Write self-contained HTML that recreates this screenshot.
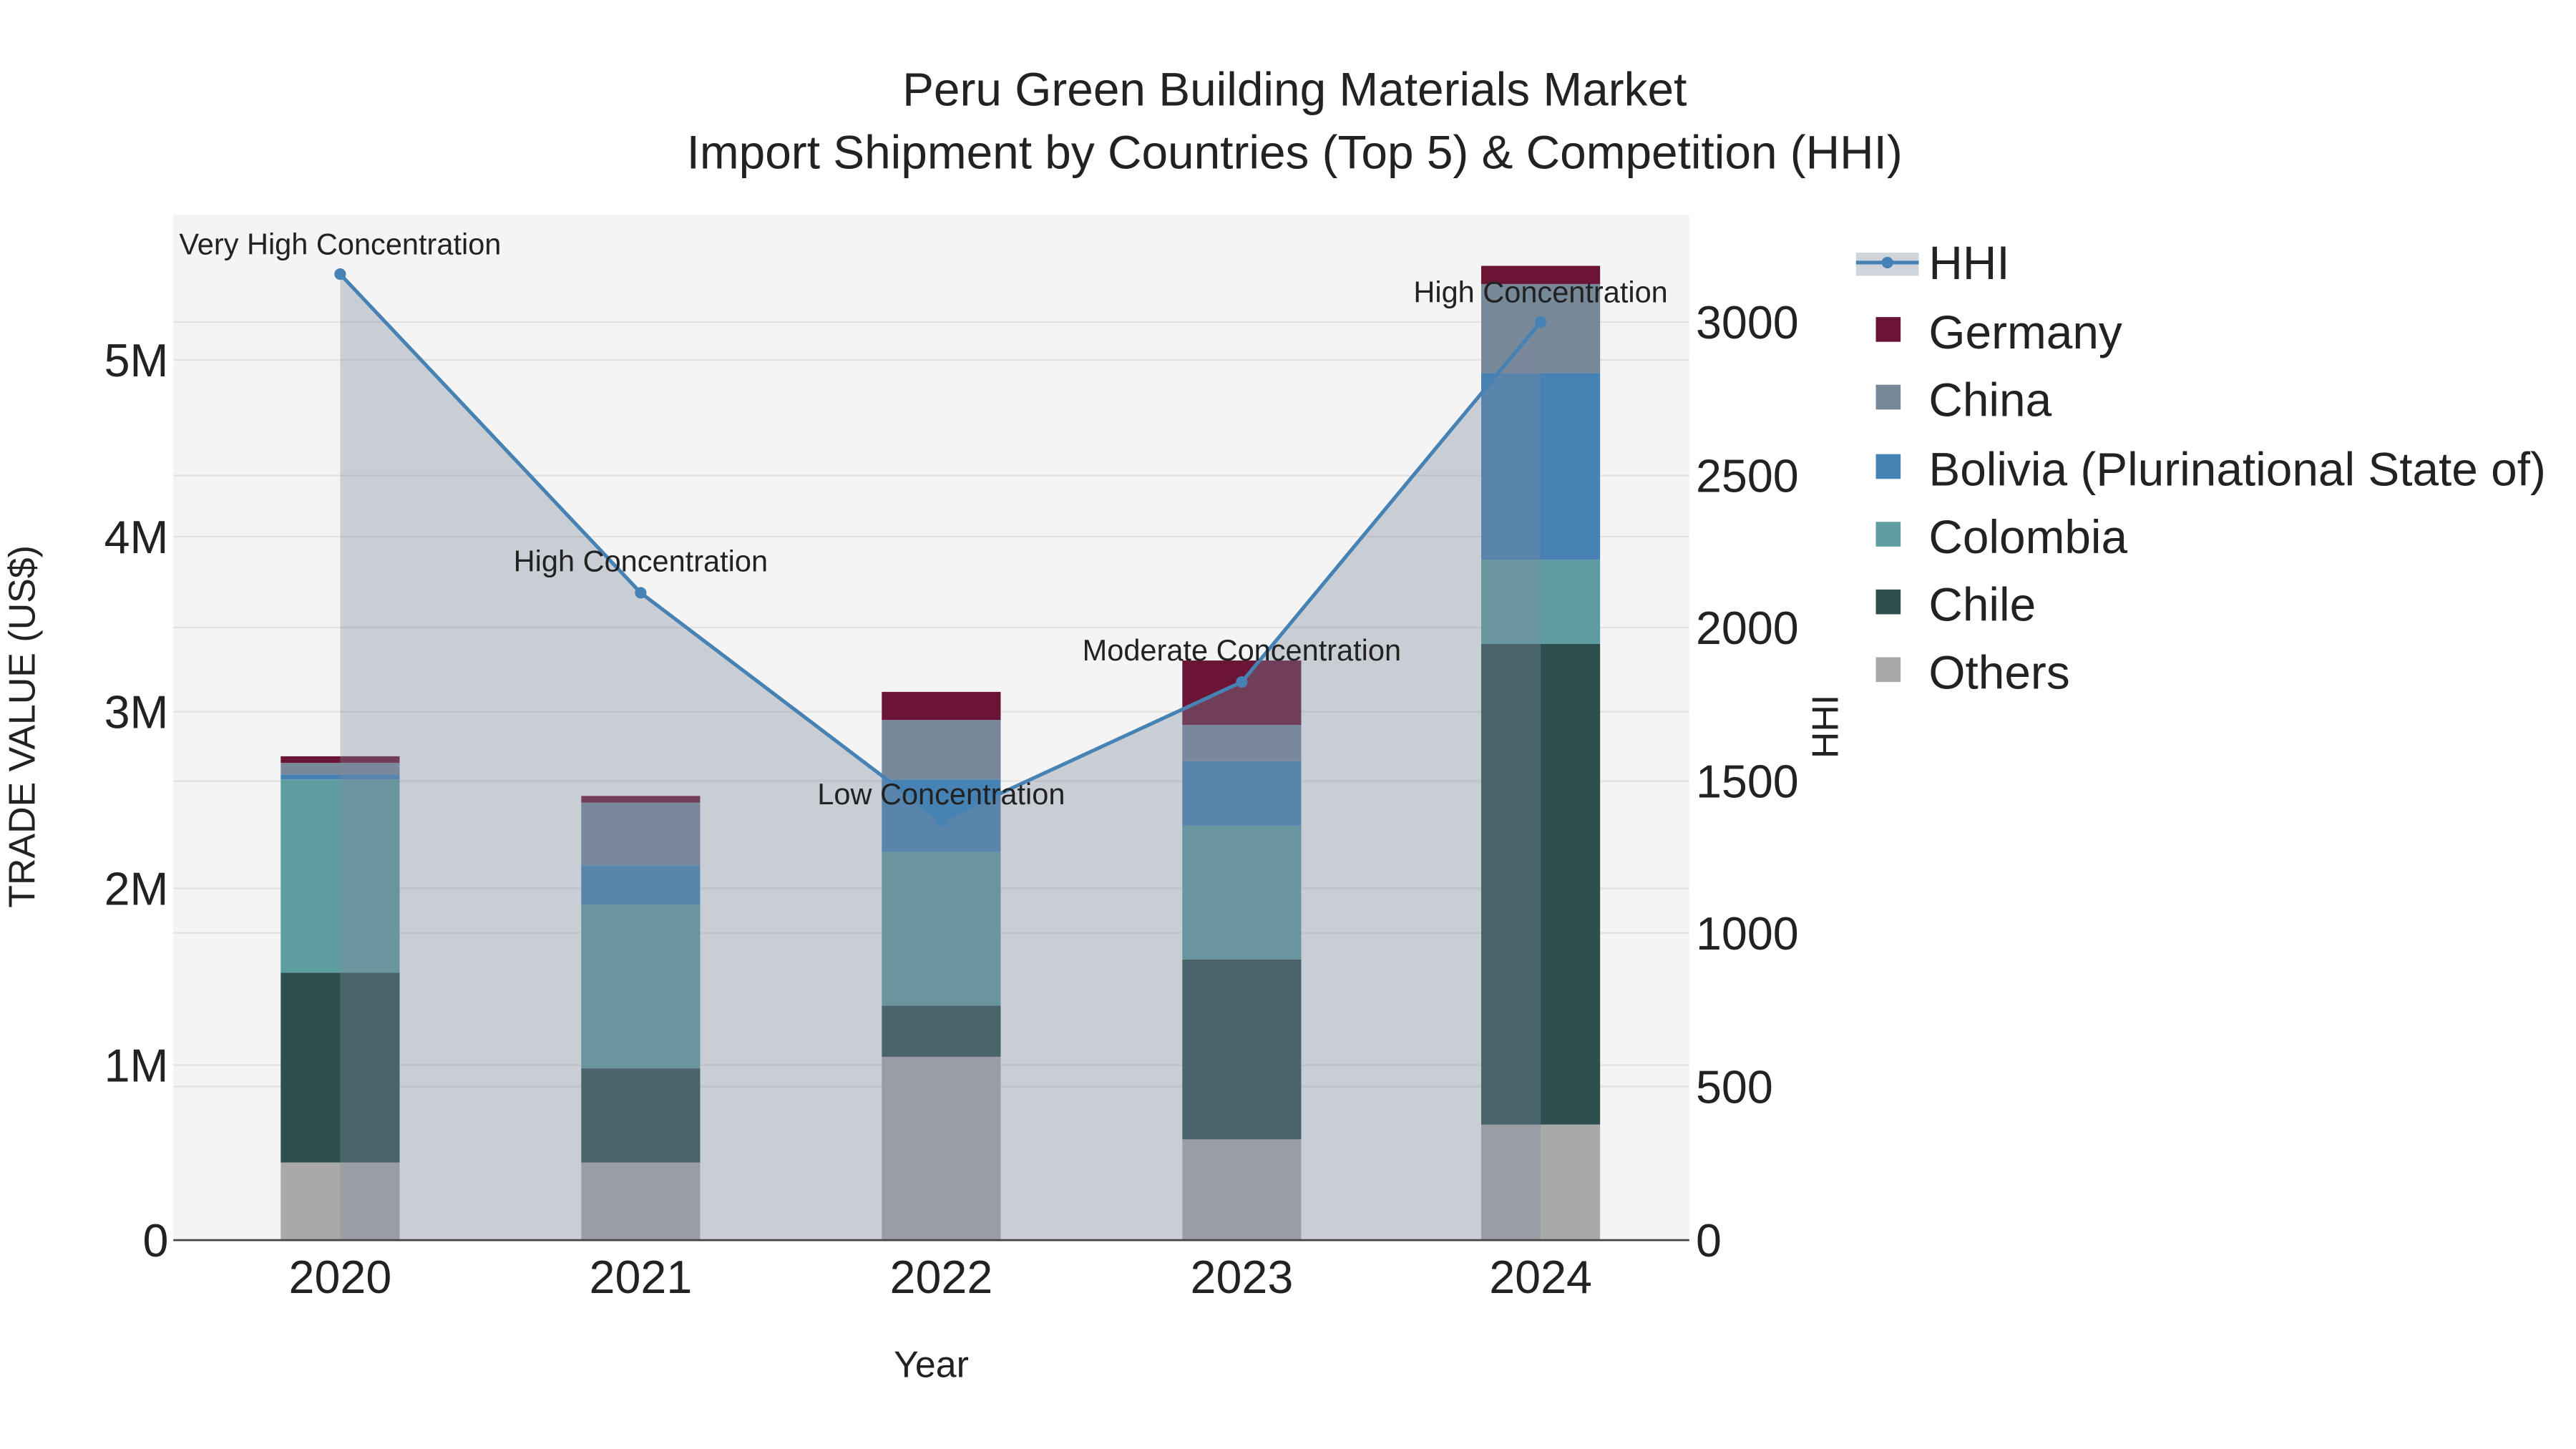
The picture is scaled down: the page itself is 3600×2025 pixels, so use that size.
<!DOCTYPE html>
<html><head><meta charset="utf-8"><style>
html,body{margin:0;padding:0;background:#fff;}
svg{display:block;}
text{font-family:"Liberation Sans",sans-serif;fill:#222;}
</style></head><body>
<svg width="3600" height="2025" viewBox="0 0 1560 877.5" xmlns="http://www.w3.org/2000/svg">
<rect width="1560" height="877.5" fill="#fff"/>
<rect x="105" y="130" width="918" height="621" fill="#f4f4f4"/>
<g stroke="#e2e2e2" stroke-width="1">
<line x1="105" x2="1023" y1="645" y2="645"/><line x1="105" x2="1023" y1="538" y2="538"/><line x1="105" x2="1023" y1="431" y2="431"/><line x1="105" x2="1023" y1="325" y2="325"/><line x1="105" x2="1023" y1="218" y2="218"/>
<line x1="105" x2="1023" y1="658" y2="658"/><line x1="105" x2="1023" y1="565" y2="565"/><line x1="105" x2="1023" y1="473" y2="473"/><line x1="105" x2="1023" y1="380" y2="380"/><line x1="105" x2="1023" y1="288" y2="288"/><line x1="105" x2="1023" y1="195" y2="195"/>
</g>
<g>
<rect x="170" y="704" width="72" height="47" fill="#a9a9a9"/><rect x="170" y="589" width="72" height="115" fill="#2f4f4f"/><rect x="170" y="472" width="72" height="117" fill="#5f9ea0"/><rect x="170" y="469" width="72" height="3" fill="#4682b4"/><rect x="170" y="462" width="72" height="7" fill="#778899"/><rect x="170" y="458" width="72" height="4" fill="#6b1536"/>
<rect x="352" y="704" width="72" height="47" fill="#a9a9a9"/><rect x="352" y="647" width="72" height="57" fill="#2f4f4f"/><rect x="352" y="548" width="72" height="99" fill="#5f9ea0"/><rect x="352" y="524" width="72" height="24" fill="#4682b4"/><rect x="352" y="486" width="72" height="38" fill="#778899"/><rect x="352" y="482" width="72" height="4" fill="#6b1536"/>
<rect x="534" y="640" width="72" height="111" fill="#a9a9a9"/><rect x="534" y="609" width="72" height="31" fill="#2f4f4f"/><rect x="534" y="516" width="72" height="93" fill="#5f9ea0"/><rect x="534" y="472" width="72" height="44" fill="#4682b4"/><rect x="534" y="436" width="72" height="36" fill="#778899"/><rect x="534" y="419" width="72" height="17" fill="#6b1536"/>
<rect x="716" y="690" width="72" height="61" fill="#a9a9a9"/><rect x="716" y="581" width="72" height="109" fill="#2f4f4f"/><rect x="716" y="500" width="72" height="81" fill="#5f9ea0"/><rect x="716" y="461" width="72" height="39" fill="#4682b4"/><rect x="716" y="439" width="72" height="22" fill="#778899"/><rect x="716" y="400" width="72" height="39" fill="#6b1536"/>
<rect x="897" y="681" width="72" height="70" fill="#a9a9a9"/><rect x="897" y="390" width="72" height="291" fill="#2f4f4f"/><rect x="897" y="339" width="72" height="51" fill="#5f9ea0"/><rect x="897" y="226" width="72" height="113" fill="#4682b4"/><rect x="897" y="172" width="72" height="54" fill="#778899"/><rect x="897" y="161" width="72" height="11" fill="#6b1536"/>
</g>
<path d="M206,166 L388,359 L570,497 L752,413 L933,195 L933,751 L206,751 Z" fill="rgba(125,136,155,0.36)"/>
<path d="M206,166 L388,359 L570,497 L752,413 L933,195" fill="none" stroke="#4682b4" stroke-width="2.2"/>
<g fill="#4682b4"><circle cx="206" cy="166" r="3.5"/><circle cx="388" cy="359" r="3.5"/><circle cx="570" cy="497" r="3.5"/><circle cx="752" cy="413" r="3.5"/><circle cx="933" cy="195" r="3.5"/></g>
<line x1="105" x2="1023" y1="751" y2="751" stroke="#444" stroke-width="1.2"/>
<g font-size="18" text-anchor="middle">
<text x="206" y="154">Very High Concentration</text>
<text x="388" y="346">High Concentration</text>
<text x="570" y="487">Low Concentration</text>
<text x="752" y="400">Moderate Concentration</text>
<text x="933" y="183">High Concentration</text>
</g>
<g font-size="28.5" text-anchor="middle">
<text x="784" y="64">Peru Green Building Materials Market</text>
<text x="784" y="102">Import Shipment by Countries (Top 5) &amp; Competition (HHI)</text>
</g>
<g font-size="28" text-anchor="end">
<text x="102" y="761">0</text><text x="102" y="655">1M</text><text x="102" y="548">2M</text><text x="102" y="441">3M</text><text x="102" y="335">4M</text><text x="102" y="228">5M</text>
</g>
<g font-size="28" text-anchor="start">
<text x="1027" y="761">0</text><text x="1027" y="668">500</text><text x="1027" y="575">1000</text><text x="1027" y="483">1500</text><text x="1027" y="390">2000</text><text x="1027" y="298">2500</text><text x="1027" y="205">3000</text>
</g>
<g font-size="28" text-anchor="middle">
<text x="206" y="783">2020</text><text x="388" y="783">2021</text><text x="570" y="783">2022</text><text x="752" y="783">2023</text><text x="933" y="783">2024</text>
</g>
<text x="564" y="834" font-size="22.5" text-anchor="middle">Year</text>
<text transform="translate(21,440) rotate(-90)" font-size="22.5" text-anchor="middle">TRADE VALUE (US$)</text>
<text transform="translate(1113,440) rotate(-90)" font-size="22.5" text-anchor="middle">HHI</text>
<rect x="1124" y="153" width="38" height="14" fill="rgba(125,136,155,0.36)"/>
<line x1="1124" x2="1162" y1="159" y2="159" stroke="#4682b4" stroke-width="2.2"/><circle cx="1143" cy="159" r="3.5" fill="#4682b4"/>
<text x="1168" y="169" font-size="28.5">HHI</text>
<rect x="1136" y="192" width="15" height="15" fill="#6b1536"/><text x="1168" y="211" font-size="28.5">Germany</text>
<rect x="1136" y="233" width="15" height="15" fill="#778899"/><text x="1168" y="252" font-size="28.5">China</text>
<rect x="1136" y="275" width="15" height="15" fill="#4682b4"/><text x="1168" y="294" font-size="28.5">Bolivia (Plurinational State of)</text>
<rect x="1136" y="316" width="15" height="15" fill="#5f9ea0"/><text x="1168" y="335" font-size="28.5">Colombia</text>
<rect x="1136" y="357" width="15" height="15" fill="#2f4f4f"/><text x="1168" y="376" font-size="28.5">Chile</text>
<rect x="1136" y="398" width="15" height="15" fill="#a9a9a9"/><text x="1168" y="417" font-size="28.5">Others</text>
</svg>
</body></html>
